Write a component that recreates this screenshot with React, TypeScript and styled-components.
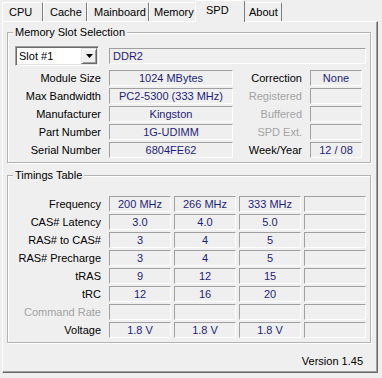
import React from 'react';
import styled, { createGlobalStyle } from 'styled-components';

const Global = createGlobalStyle`
  html, body { margin: 0; padding: 0; background: #efefef; }
  body { font-family: "Liberation Sans", Arial, sans-serif; font-size: 11px; color: #000; }
  * { box-sizing: border-box; }
`;

const Window = styled.div`
  width: 382px;
  height: 378px;
  background: #efefef;
  overflow: hidden;
  display: flex;
  flex-direction: column;
`;

const TabRow = styled.div`
  display: flex;
  align-items: flex-end;
  height: 21px;
  padding-left: 2px;
`;

const Tab = styled.div<{ $w: number; $pl: number; $active?: boolean }>`
  width: ${(p) => (p.$active ? p.$w + 3 : p.$w)}px;
  height: ${(p) => (p.$active ? 22 : 19)}px;
  margin: ${(p) => (p.$active ? '0 -2px -1px -1px' : '0')};
  padding: 3px 0 0 ${(p) => p.$pl}px;
  position: relative;
  z-index: ${(p) => (p.$active ? 2 : 1)};
  background: #efefef;
  border-top: 1px solid #ffffff;
  border-left: 1px solid #ffffff;
  border-right: 1px solid #7c7c7c;
  border-radius: 2px 2px 0 0;
  line-height: 13px;
  white-space: nowrap;
`;

const Panel = styled.div`
  margin-left: 2px;
  width: 376px;
  height: 352px;
  border-top: 1px solid #ffffff;
  border-left: 1px solid #ffffff;
  border-right: 1px solid #696969;
  border-bottom: 1px solid #696969;
  box-shadow: inset -1px -1px 0 #a0a0a0;
  padding: 10px 6px 0 4px;
  display: flex;
  flex-direction: column;
`;

const Group = styled.div<{ $pt: number; $mt?: number }>`
  position: relative;
  margin-top: ${(p) => p.$mt ?? 0}px;
  border: 1px solid #b3b3b3;
  box-shadow: inset 1px 1px 0 #ffffff, 1px 1px 0 #ffffff;
  padding: ${(p) => p.$pt}px 0 4px 0;
  display: flex;
  flex-direction: column;
  gap: 2px;
`;

const GroupTitle = styled.span`
  position: absolute;
  top: -7px;
  left: 5px;
  padding: 0 2px;
  background: #efefef;
  line-height: 13px;
`;

const SelectRow = styled.div`
  display: flex;
  align-items: center;
  height: 20px;
  padding-left: 7px;
  margin-bottom: 2px;
`;

const Combo = styled.div`
  width: 84px;
  height: 20px;
  background: #ffffff;
  border: 1px solid;
  border-color: #a0a0a0 #ffffff #ffffff #a0a0a0;
  box-shadow: inset 1px 1px 0 #696969, inset -1px -1px 0 #e3e3e3;
  display: flex;
  align-items: stretch;
  padding: 1px;
`;

const ComboText = styled.div`
  flex: 1;
  padding-left: 2px;
  line-height: 16px;
`;

const ComboButton = styled.div`
  width: 16px;
  background: #efefef;
  border: 1px solid;
  border-color: #e3e3e3 #696969 #696969 #e3e3e3;
  box-shadow: inset 1px 1px 0 #ffffff, inset -1px -1px 0 #a0a0a0;
  display: flex;
  align-items: center;
  justify-content: center;
`;

const Row = styled.div`
  display: flex;
  height: 16px;
`;

const Label = styled.div<{ $w: number; $disabled?: boolean }>`
  width: ${(p) => p.$w}px;
  text-align: right;
  line-height: 16px;
  white-space: nowrap;
  color: ${(p) => (p.$disabled ? '#a3a3a3' : '#000000')};
`;

const Field = styled.div<{ $w: number; $ml: number; $left?: boolean }>`
  width: ${(p) => p.$w}px;
  margin-left: ${(p) => p.$ml}px;
  height: 16px;
  border: 1px solid;
  border-color: #a0a0a0 #ffffff #ffffff #a0a0a0;
  color: #1e1e7a;
  line-height: 14px;
  text-align: ${(p) => (p.$left ? 'left' : 'center')};
  padding-left: ${(p) => (p.$left ? 3 : 0)}px;
  white-space: nowrap;
  overflow: hidden;
`;

const Version = styled.div`
  margin-top: 12px;
  text-align: right;
  padding-right: 8px;
  line-height: 13px;
`;

const tabs: [string, number, number][] = [
  ['CPU', 41, 6],
  ['Cache', 44, 6],
  ['Mainboard', 62, 6],
  ['Memory', 47, 4],
  ['SPD', 47, 10],
  ['About', 39, 5],
];

const slotRows: [string, string, string, string, boolean][] = [
  ['Module Size', '1024 MBytes', 'Correction', 'None', false],
  ['Max Bandwidth', 'PC2-5300 (333 MHz)', 'Registered', '', true],
  ['Manufacturer', 'Kingston', 'Buffered', '', true],
  ['Part Number', '1G-UDIMM', 'SPD Ext.', '', true],
  ['Serial Number', '6804FE62', 'Week/Year', '12 / 08', false],
];

const timingRows: [string, string[], boolean][] = [
  ['Frequency', ['200 MHz', '266 MHz', '333 MHz', ''], false],
  ['CAS# Latency', ['3.0', '4.0', '5.0', ''], false],
  ['RAS# to CAS#', ['3', '4', '5', ''], false],
  ['RAS# Precharge', ['3', '4', '5', ''], false],
  ['tRAS', ['9', '12', '15', ''], false],
  ['tRC', ['12', '16', '20', ''], false],
  ['Command Rate', ['', '', '', ''], true],
  ['Voltage', ['1.8 V', '1.8 V', '1.8 V', ''], false],
];

export default function App() {
  return (
    <Window>
      <Global />
      <TabRow>
        {tabs.map(([name, w, pl]) => (
          <Tab key={name} $w={w} $pl={pl} $active={name === 'SPD'}>
            {name}
          </Tab>
        ))}
      </TabRow>
      <Panel>
        <Group $pt={13}>
          <GroupTitle>Memory Slot Selection</GroupTitle>
          <SelectRow>
            <Combo>
              <ComboText>Slot #1</ComboText>
              <ComboButton>
                <svg width="7" height="4" viewBox="0 0 7 4">
                  <path d="M0 0H7L3.5 4Z" fill="#000" />
                </svg>
              </ComboButton>
            </Combo>
            <Field $w={257} $ml={10} $left>
              DDR2
            </Field>
          </SelectRow>
          {slotRows.map(([l1, v1, l2, v2, dis]) => (
            <Row key={l1}>
              <Label $w={93}>{l1}</Label>
              <Field $w={124} $ml={8}>
                {v1}
              </Field>
              <Label $w={69} $disabled={dis}>
                {l2}
              </Label>
              <Field $w={52} $ml={8}>
                {v2}
              </Field>
            </Row>
          ))}
        </Group>
        <Group $pt={20} $mt={12}>
          <GroupTitle>Timings Table</GroupTitle>
          {timingRows.map(([label, vals, dis]) => (
            <Row key={label}>
              <Label $w={93} $disabled={dis}>
                {label}
              </Label>
              {vals.map((v, i) => (
                <Field key={i} $w={62} $ml={i === 0 ? 8 : 3}>
                  {v}
                </Field>
              ))}
            </Row>
          ))}
        </Group>
        <Version>Version 1.45</Version>
      </Panel>
    </Window>
  );
}
